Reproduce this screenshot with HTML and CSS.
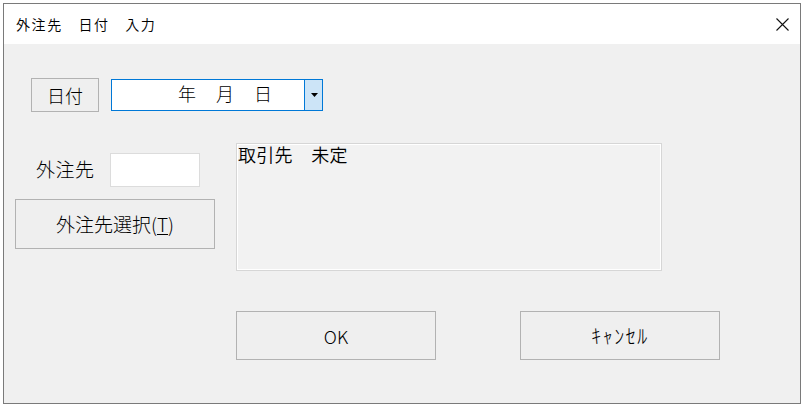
FILE: index.html
```html
<!DOCTYPE html>
<html lang="ja">
<head>
<meta charset="utf-8">
<title>外注先 日付 入力</title>
<link rel="stylesheet" href="styles.css">
</head>
<body>
<div class="window">
  <div class="titlebar">
    <span class="title">外注先　日付　入力</span>
    <svg class="close" width="13" height="13" viewBox="0 0 13 13"><path d="M0.5 0.5 L12.5 12.5 M12.5 0.5 L0.5 12.5" stroke="#111" stroke-width="1.1" fill="none"/></svg>
  </div>
  <div class="client">
    <div class="row1">
      <button class="btn btn-date">日付</button>
      <div class="combo">
        <span class="combo-text">年　月　日</span>
        <span class="combo-drop"><svg width="7" height="4" viewBox="0 0 7 4"><path d="M0 0 H7 L3.5 4 Z" fill="#000"/></svg></span>
      </div>
    </div>
    <div class="row2">
      <div class="left">
        <div class="field">
          <span class="label">外注先</span>
          <div class="textbox"></div>
        </div>
        <button class="btn btn-select">外注先選択(<u>T</u>)</button>
      </div>
      <div class="infobox">取引先　未定</div>
    </div>
    <div class="row3">
      <button class="btn btn-ok">OK</button>
      <button class="btn btn-cancel">ｷｬﾝｾﾙ</button>
    </div>
  </div>
</div>
</body>
</html>
```

FILE: styles.css
```css
html, body {
  margin: 0;
  padding: 0;
  background: #ffffff;
}

body {
  font-family: "Noto Sans CJK JP", "Noto Sans", sans-serif;
  font-weight: 300;
  color: #000;
}

.window {
  box-sizing: border-box;
  margin: 3px 0 0 3px;
  width: 798px;
  height: 401px;
  border: 1px solid #7a7a7a;
  background: #f0f0f0;
  display: flex;
  flex-direction: column;
}

.titlebar {
  height: 40px;
  background: #ffffff;
  display: flex;
  align-items: center;
  justify-content: space-between;
  padding: 0 11px 0 12px;
}

.title {
  font-size: 14px;
  font-weight: 350;
  letter-spacing: 1.6px;
  line-height: 20px;
}

.close {
  display: block;
}

.client {
  flex: 1;
  display: flex;
  flex-direction: column;
}

.btn {
  box-sizing: border-box;
  margin: 0;
  padding: 0;
  border: 1px solid #b2b2b2;
  background: #efefef;
  font-family: "Noto Sans CJK JP", "Noto Sans", sans-serif;
  font-weight: 300;
  font-size: 19px;
  color: #000;
  line-height: 20px;
}

.btn u {
  text-decoration-thickness: 1px;
  text-underline-offset: 2px;
}

.row1 {
  margin-top: 34px;
  padding-left: 27px;
  display: flex;
  align-items: center;
}

.btn-date {
  width: 68px;
  height: 34px;
  font-size: 18px;
  padding-bottom: 1px;
}

.combo {
  box-sizing: border-box;
  margin-left: 12px;
  width: 212px;
  height: 32px;
  border: 1px solid #0078d7;
  background: #ffffff;
  display: flex;
}

.combo-text {
  flex: 1;
  padding-left: 66px;
  font-size: 18px;
  line-height: 26px;
  letter-spacing: 1px;
}

.combo-drop {
  width: 17px;
  border-left: 1px solid #0078d7;
  background: #cce4f7;
  display: flex;
  align-items: center;
  justify-content: center;
}

.combo-drop svg {
  display: block;
  margin-left: 1px;
}

.row2 {
  margin-top: 31px;
  display: flex;
  align-items: flex-start;
}

.left {
  margin-left: 11px;
  width: 200px;
  display: flex;
  flex-direction: column;
}

.field {
  margin-top: 10px;
  height: 34px;
  padding-left: 21px;
  display: flex;
  align-items: center;
}

.label {
  width: 74px;
  font-size: 19px;
  line-height: 20px;
  letter-spacing: 0.5px;
  padding-bottom: 3px;
}

.textbox {
  box-sizing: border-box;
  width: 90px;
  height: 34px;
  border: 1px solid #dcdcdc;
  background: #ffffff;
}

.btn-select {
  margin-top: 12px;
  width: 200px;
  height: 50px;
}

.infobox {
  box-sizing: border-box;
  margin-left: 21px;
  width: 426px;
  height: 128px;
  border: 1px solid #d6d6d6;
  box-shadow: inset 0 0 0 1px #ffffff;
  background: #f2f2f2;
  padding: 1px 0 0 1px;
  font-size: 18px;
  font-weight: 350;
  line-height: 18px;
  letter-spacing: 0.3px;
}

.row3 {
  margin-top: 40px;
  padding-left: 232px;
  display: flex;
  gap: 84px;
}

.btn-ok,
.btn-cancel {
  width: 200px;
  height: 49px;
}

.btn-ok {
  font-size: 18px;
}

.btn-cancel {
  font-size: 20px;
  letter-spacing: 1.5px;
}
```
